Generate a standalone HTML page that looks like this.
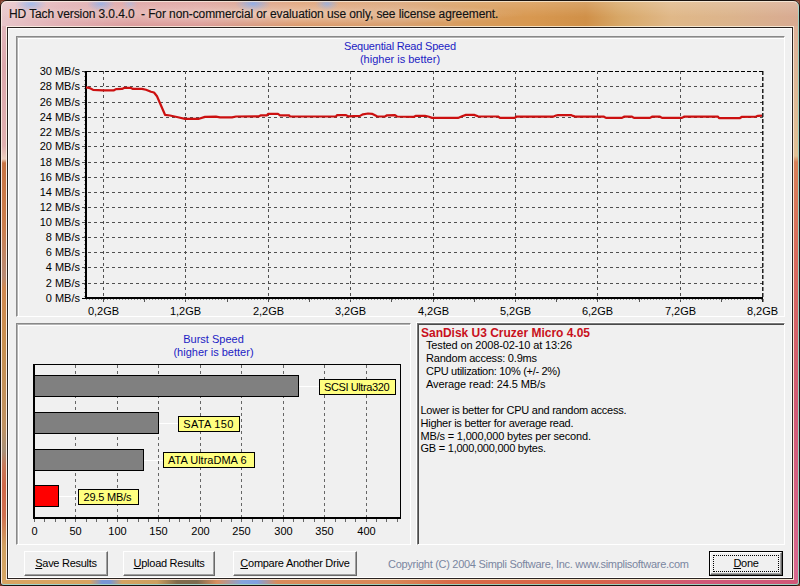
<!DOCTYPE html>
<html><head><meta charset="utf-8"><style>
html,body{margin:0;padding:0}
body{width:800px;height:586px;position:relative;overflow:hidden;background:#7a3a28;font-family:"Liberation Sans", sans-serif}
.abs{position:absolute}
#win{position:absolute;left:0;top:0;width:798px;height:584px;border:1px solid #1a1410;border-radius:7px 7px 4px 4px;overflow:hidden;
 background:radial-gradient(ellipse 16px 8px at 30px 3px,rgba(140,175,235,0.9),rgba(150,180,230,0)),radial-gradient(ellipse 14px 8px at 100px 3px,rgba(130,165,230,0.85),rgba(140,170,225,0)),radial-gradient(ellipse 8px 6px at 129px 3px,rgba(150,180,230,0.6),rgba(150,180,230,0)),radial-gradient(ellipse 18px 8px at 252px 3px,rgba(110,155,235,0.9),rgba(120,160,230,0)),radial-gradient(ellipse 12px 7px at 326px 3px,rgba(120,160,230,0.8),rgba(130,165,225,0)),linear-gradient(90deg,#e8c6ca 0px,#e2b0b4 60px,#dc9e9e 130px,#dc9c98 200px,#d89a86 240px,#dc9a6c 300px,#d8a070 400px,#d89c5c 470px,#d89850 530px,#d09048 585px,#d8a868 620px,#e0b888 670px,#dcb48c 730px,#d8aa92 800px)}
#lf{position:absolute;left:2px;top:26px;width:4px;height:558px;background:linear-gradient(180deg,#e2b6bc 0,#dca8ac 40px,#e0b0b0 120px,#ecd0c0 133px,#c87444 137px,#cc7e4c 200px,#b88a74 250px,#d08850 262px,#c89050 320px,#c09262 400px,#a89078 425px,#c87858 440px,#d06848 460px,#d07050 490px,#d0a060 520px,#d8a866 558px)}
#rf{position:absolute;left:794px;top:26px;width:4px;height:558px;background:linear-gradient(180deg,#dcb098 0,#e0c094 130px,#d88058 136px,#d86a5c 230px,#d05a74 380px,#d86890 558px)}
#bf{position:absolute;left:2px;top:580px;width:796px;height:4px;background:linear-gradient(90deg,#d8a462 0,#d8a462 88px,#7896d4 100px,#7896d4 108px,#d4a462 120px,#cca060 155px,#806c4c 175px,#7c6c50 195px,#d89060 215px,#84a4dc 240px,#80a0e0 255px,#d88c5c 275px,#d88858 390px,#d86a48 450px,#d86448 590px,#d05878 700px,#d05878 797px)}
#glow{position:absolute;left:2px;top:2px;width:520px;height:24px;background:radial-gradient(ellipse 270px 12px at 255px 12px,rgba(255,245,235,0.45),rgba(255,245,235,0) 100%)}
#title{position:absolute;left:9px;top:7px;font-size:12px;color:#111;-webkit-text-stroke:0.15px #111;text-shadow:0 0 5px rgba(255,245,235,0.55);white-space:pre;letter-spacing:-0.1px;line-height:15px}
#client{position:absolute;left:7px;top:27px;width:784px;height:550px;border:1px solid #2a2320;background:#f0f0f0}
#client .hl{position:absolute;left:0;top:0;width:782px;height:548px;border:1px solid #fff}
.pan{position:absolute}
.btn{position:absolute;box-sizing:border-box;background:#f0f0f0;border-top:1px solid #fff;border-left:1px solid #fff;border-right:1px solid #696969;border-bottom:1px solid #696969}
.btn .b2{position:absolute;left:0;top:0;right:0;bottom:0;border-right:1px solid #a0a0a0;border-bottom:1px solid #a0a0a0}
.blab{position:absolute;font-size:11px;white-space:pre;color:#000;line-height:13px;text-align:center;letter-spacing:-0.27px}
svg text{font-family:"Liberation Sans", sans-serif}
.lab{font-size:11px;fill:#000}
.ttl{font-size:11px;fill:#1c1cc4}
.inf{font-size:11px;fill:#000}
.red{fill:#c81020;font-weight:bold;font-size:12px}
.copy{font-size:11px;fill:#7a86a0}
</style></head><body>
<div id="win"></div>
<div id="lf"></div><div id="rf"></div><div id="bf"></div>
<div class="abs" style="left:1px;top:1px;width:798px;height:584px;box-sizing:border-box;border:1px solid rgba(255,250,235,0.65);border-right-color:rgba(150,215,205,0.85);border-bottom-color:rgba(150,215,205,0.85);border-radius:6px 6px 3px 3px"></div>
<div class="abs" style="left:6px;top:26px;width:788px;height:554px;box-sizing:border-box;border:1px solid rgba(255,250,235,0.75)"></div>
<div class="abs" style="left:1px;top:1px;width:798px;height:16px;background:linear-gradient(180deg,rgba(255,255,255,0.18),rgba(255,255,255,0))"></div>
<div id="glow"></div>
<div id="title">HD Tach version 3.0.4.0  - For non-commercial or evaluation use only, see license agreement.</div>
<div id="client"><div class="hl"></div></div>
<!-- chart panel -->
<div class="pan" style="left:16px;top:36px;width:769px;height:281px;box-sizing:border-box;border-top:1px solid #888;border-left:1px solid #888;border-right:1px solid #fff;border-bottom:1px solid #fff"><div style="position:absolute;left:0;top:0;right:0;bottom:0;border-top:1px solid #b4b4b4;border-left:1px solid #b4b4b4"></div><div style="position:absolute;left:1px;top:1px;right:0;bottom:0;border-top:1px solid #fff;border-left:1px solid #fff"></div></div>
<!-- burst panel -->
<div class="pan" style="left:16px;top:323px;width:395px;height:222px;box-sizing:border-box;border-top:1px solid #888;border-left:1px solid #888;border-right:1px solid #fff;border-bottom:1px solid #fff"><div style="position:absolute;left:0;top:0;right:0;bottom:0;border-top:1px solid #b4b4b4;border-left:1px solid #b4b4b4"></div><div style="position:absolute;left:1px;top:1px;right:0;bottom:0;border-top:1px solid #fff;border-left:1px solid #fff"></div></div>
<!-- info panel -->
<div class="pan" style="left:416px;top:322px;width:369px;height:223px;box-sizing:border-box;border-top:1px solid #fff;border-left:1px solid #fff"><div style="position:absolute;left:0;top:0;right:0;bottom:0;border-top:1px solid #7a7a7a;border-left:1px solid #7a7a7a;border-right:1px solid #fff;border-bottom:1px solid #fff"><div style="position:absolute;left:0;top:0;right:0;bottom:0;border-top:1px solid #4a4a4a;border-left:1px solid #4a4a4a"></div></div></div>
<svg class="abs" style="left:0;top:0" width="800" height="586" viewBox="0 0 800 586">
<line x1="82" y1="71.5" x2="87" y2="71.5" stroke="#3a3a3a" stroke-width="1"/>
<line x1="87" y1="71.5" x2="764" y2="71.5" stroke="#000" stroke-width="1.2" stroke-dasharray="4,2" />
<text x="80" y="75" text-anchor="end" class="lab">30 MB/s</text>
<line x1="82" y1="86.5" x2="763" y2="86.5" stroke="#505050" stroke-width="1" stroke-dasharray="3,3" />
<text x="80" y="90" text-anchor="end" class="lab">28 MB/s</text>
<line x1="82" y1="102.5" x2="763" y2="102.5" stroke="#505050" stroke-width="1" stroke-dasharray="3,3" />
<text x="80" y="106" text-anchor="end" class="lab">26 MB/s</text>
<line x1="82" y1="117.5" x2="763" y2="117.5" stroke="#505050" stroke-width="1" stroke-dasharray="3,3" />
<text x="80" y="121" text-anchor="end" class="lab">24 MB/s</text>
<line x1="82" y1="132.5" x2="763" y2="132.5" stroke="#505050" stroke-width="1" stroke-dasharray="3,3" />
<text x="80" y="136" text-anchor="end" class="lab">22 MB/s</text>
<line x1="82" y1="146.5" x2="763" y2="146.5" stroke="#505050" stroke-width="1" stroke-dasharray="3,3" />
<text x="80" y="150" text-anchor="end" class="lab">20 MB/s</text>
<line x1="82" y1="162.5" x2="763" y2="162.5" stroke="#505050" stroke-width="1" stroke-dasharray="3,3" />
<text x="80" y="166" text-anchor="end" class="lab">18 MB/s</text>
<line x1="82" y1="177.5" x2="763" y2="177.5" stroke="#505050" stroke-width="1" stroke-dasharray="3,3" />
<text x="80" y="181" text-anchor="end" class="lab">16 MB/s</text>
<line x1="82" y1="192.5" x2="763" y2="192.5" stroke="#505050" stroke-width="1" stroke-dasharray="3,3" />
<text x="80" y="196" text-anchor="end" class="lab">14 MB/s</text>
<line x1="82" y1="207.5" x2="763" y2="207.5" stroke="#505050" stroke-width="1" stroke-dasharray="3,3" />
<text x="80" y="211" text-anchor="end" class="lab">12 MB/s</text>
<line x1="82" y1="222.5" x2="763" y2="222.5" stroke="#505050" stroke-width="1" stroke-dasharray="3,3" />
<text x="80" y="226" text-anchor="end" class="lab">10 MB/s</text>
<line x1="82" y1="237.5" x2="763" y2="237.5" stroke="#505050" stroke-width="1" stroke-dasharray="3,3" />
<text x="80" y="241" text-anchor="end" class="lab">8 MB/s</text>
<line x1="82" y1="252.5" x2="763" y2="252.5" stroke="#505050" stroke-width="1" stroke-dasharray="3,3" />
<text x="80" y="256" text-anchor="end" class="lab">6 MB/s</text>
<line x1="82" y1="267.5" x2="763" y2="267.5" stroke="#505050" stroke-width="1" stroke-dasharray="3,3" />
<text x="80" y="271" text-anchor="end" class="lab">4 MB/s</text>
<line x1="82" y1="283.5" x2="763" y2="283.5" stroke="#505050" stroke-width="1" stroke-dasharray="3,3" />
<text x="80" y="287" text-anchor="end" class="lab">2 MB/s</text>
<line x1="82" y1="298.5" x2="87" y2="298.5" stroke="#000" stroke-width="1"/>
<text x="80" y="302" text-anchor="end" class="lab">0 MB/s</text>
<line x1="103.5" y1="71" x2="103.5" y2="302" stroke="#505050" stroke-width="1" stroke-dasharray="3,3" />
<text x="103.5" y="315" text-anchor="middle" class="lab">0,2GB</text>
<line x1="185.5" y1="71" x2="185.5" y2="302" stroke="#505050" stroke-width="1" stroke-dasharray="3,3" />
<text x="185.5" y="315" text-anchor="middle" class="lab">1,2GB</text>
<line x1="268.5" y1="71" x2="268.5" y2="302" stroke="#505050" stroke-width="1" stroke-dasharray="3,3" />
<text x="268.5" y="315" text-anchor="middle" class="lab">2,2GB</text>
<line x1="350.5" y1="71" x2="350.5" y2="302" stroke="#505050" stroke-width="1" stroke-dasharray="3,3" />
<text x="350.5" y="315" text-anchor="middle" class="lab">3,2GB</text>
<line x1="433.5" y1="71" x2="433.5" y2="302" stroke="#505050" stroke-width="1" stroke-dasharray="3,3" />
<text x="433.5" y="315" text-anchor="middle" class="lab">4,2GB</text>
<line x1="515.5" y1="71" x2="515.5" y2="302" stroke="#505050" stroke-width="1" stroke-dasharray="3,3" />
<text x="515.5" y="315" text-anchor="middle" class="lab">5,2GB</text>
<line x1="597.5" y1="71" x2="597.5" y2="302" stroke="#505050" stroke-width="1" stroke-dasharray="3,3" />
<text x="597.5" y="315" text-anchor="middle" class="lab">6,2GB</text>
<line x1="680.5" y1="71" x2="680.5" y2="302" stroke="#505050" stroke-width="1" stroke-dasharray="3,3" />
<text x="680.5" y="315" text-anchor="middle" class="lab">7,2GB</text>
<line x1="762.8" y1="71" x2="762.8" y2="302" stroke="#000" stroke-width="1.3" stroke-dasharray="4,2" />
<text x="762.5" y="315" text-anchor="middle" class="lab">8,2GB</text>
<rect x="85" y="71" width="2" height="227" fill="#000"/>
<rect x="85" y="297" width="678" height="2" fill="#000"/>
<line x1="86" y1="299.5" x2="763" y2="299.5" stroke="#8a8a8a" stroke-width="1" stroke-dasharray="1,2"/>
<line x1="84.5" y1="72" x2="84.5" y2="297" stroke="#8a8a8a" stroke-width="1" stroke-dasharray="1,3"/>
<line x1="144.5" y1="299" x2="144.5" y2="302" stroke="#555" stroke-width="1"/>
<line x1="227.5" y1="299" x2="227.5" y2="302" stroke="#555" stroke-width="1"/>
<line x1="309.5" y1="299" x2="309.5" y2="302" stroke="#555" stroke-width="1"/>
<line x1="391.5" y1="299" x2="391.5" y2="302" stroke="#555" stroke-width="1"/>
<line x1="474.5" y1="299" x2="474.5" y2="302" stroke="#555" stroke-width="1"/>
<line x1="556.5" y1="299" x2="556.5" y2="302" stroke="#555" stroke-width="1"/>
<line x1="639.5" y1="299" x2="639.5" y2="302" stroke="#555" stroke-width="1"/>
<line x1="721.5" y1="299" x2="721.5" y2="302" stroke="#555" stroke-width="1"/>
<path d="M86,87.30 L89,87.80 L93,89.80 L103,90.30 L114,90.30 L116,89.10 L122,88.90 L124,87.90 L131,87.90 L133,88.90 L142,88.90 L146,89.80 L151,91.80 L154,92.50 L157,96.30 L165,114.80 L170,115.50 L178,117.30 L185,118.80 L199,118.80 L205,116.90 L216,116.60 L220,117.30 L232,117.30 L236,116.50 L259,116.30 L261,115.30 L267,115.30 L268,113.90 L278,113.90 L280,115.30 L289,115.30 L290,116.50 L336,116.50 L337,115.10 L346,115.10 L348,116.30 L360,115.90 L363,114.30 L368,113.50 L372,113.80 L377,116.30 L385,116.50 L387,115.30 L395,115.10 L397,116.50 L414,116.80 L416,115.80 L425,115.80 L429,116.80 L432,117.90 L458,117.90 L462,116.30 L466,114.90 L474,114.90 L478,116.30 L498,116.50 L500,117.90 L515,117.90 L516,116.70 L550,116.70 L553,116.70 L556,115.50 L558,115.10 L571,115.10 L573,115.90 L576,116.70 L604,116.70 L606,117.90 L622,117.90 L624,116.70 L632,116.70 L634,117.90 L650,117.90 L652,116.70 L660,116.70 L662,117.90 L682,117.90 L684,116.70 L718,116.70 L719,118.05 L740,118.05 L742,116.80 L756,116.55 L758,115.80 L762,115.55" fill="none" stroke="#cc1010" stroke-width="2.2" stroke-linejoin="round"/>
<text x="400" y="50" text-anchor="middle" class="ttl" textLength="112" lengthAdjust="spacing">Sequential Read Speed</text>
<text x="400" y="63" text-anchor="middle" class="ttl">(higher is better)</text>
<line x1="75.5" y1="365" x2="75.5" y2="517" stroke="#666" stroke-width="1" stroke-dasharray="3,3" />
<line x1="117.5" y1="365" x2="117.5" y2="517" stroke="#666" stroke-width="1" stroke-dasharray="3,3" />
<line x1="158.5" y1="365" x2="158.5" y2="517" stroke="#666" stroke-width="1" stroke-dasharray="3,3" />
<line x1="200.5" y1="365" x2="200.5" y2="517" stroke="#666" stroke-width="1" stroke-dasharray="3,3" />
<line x1="241.5" y1="365" x2="241.5" y2="517" stroke="#666" stroke-width="1" stroke-dasharray="3,3" />
<line x1="283.5" y1="365" x2="283.5" y2="517" stroke="#666" stroke-width="1" stroke-dasharray="3,3" />
<line x1="324.5" y1="365" x2="324.5" y2="517" stroke="#666" stroke-width="1" stroke-dasharray="3,3" />
<line x1="366.5" y1="365" x2="366.5" y2="517" stroke="#666" stroke-width="1" stroke-dasharray="3,3" />
<text x="34.5" y="535" text-anchor="middle" class="lab">0</text>
<text x="75.5" y="535" text-anchor="middle" class="lab">50</text>
<text x="117.5" y="535" text-anchor="middle" class="lab">100</text>
<text x="158.5" y="535" text-anchor="middle" class="lab">150</text>
<text x="200.5" y="535" text-anchor="middle" class="lab">200</text>
<text x="241.5" y="535" text-anchor="middle" class="lab">250</text>
<text x="283.5" y="535" text-anchor="middle" class="lab">300</text>
<text x="324.5" y="535" text-anchor="middle" class="lab">350</text>
<text x="366.5" y="535" text-anchor="middle" class="lab">400</text>
<line x1="34.5" y1="519" x2="34.5" y2="522" stroke="#666" stroke-width="1"/>
<line x1="44.5" y1="519" x2="44.5" y2="522" stroke="#666" stroke-width="1"/>
<line x1="55.5" y1="519" x2="55.5" y2="522" stroke="#666" stroke-width="1"/>
<line x1="65.5" y1="519" x2="65.5" y2="522" stroke="#666" stroke-width="1"/>
<line x1="75.5" y1="519" x2="75.5" y2="522" stroke="#666" stroke-width="1"/>
<line x1="86.5" y1="519" x2="86.5" y2="522" stroke="#666" stroke-width="1"/>
<line x1="96.5" y1="519" x2="96.5" y2="522" stroke="#666" stroke-width="1"/>
<line x1="107.5" y1="519" x2="107.5" y2="522" stroke="#666" stroke-width="1"/>
<line x1="117.5" y1="519" x2="117.5" y2="522" stroke="#666" stroke-width="1"/>
<line x1="127.5" y1="519" x2="127.5" y2="522" stroke="#666" stroke-width="1"/>
<line x1="138.5" y1="519" x2="138.5" y2="522" stroke="#666" stroke-width="1"/>
<line x1="148.5" y1="519" x2="148.5" y2="522" stroke="#666" stroke-width="1"/>
<line x1="158.5" y1="519" x2="158.5" y2="522" stroke="#666" stroke-width="1"/>
<line x1="169.5" y1="519" x2="169.5" y2="522" stroke="#666" stroke-width="1"/>
<line x1="179.5" y1="519" x2="179.5" y2="522" stroke="#666" stroke-width="1"/>
<line x1="189.5" y1="519" x2="189.5" y2="522" stroke="#666" stroke-width="1"/>
<line x1="200.5" y1="519" x2="200.5" y2="522" stroke="#666" stroke-width="1"/>
<line x1="210.5" y1="519" x2="210.5" y2="522" stroke="#666" stroke-width="1"/>
<line x1="221.5" y1="519" x2="221.5" y2="522" stroke="#666" stroke-width="1"/>
<line x1="231.5" y1="519" x2="231.5" y2="522" stroke="#666" stroke-width="1"/>
<line x1="241.5" y1="519" x2="241.5" y2="522" stroke="#666" stroke-width="1"/>
<line x1="252.5" y1="519" x2="252.5" y2="522" stroke="#666" stroke-width="1"/>
<line x1="262.5" y1="519" x2="262.5" y2="522" stroke="#666" stroke-width="1"/>
<line x1="272.5" y1="519" x2="272.5" y2="522" stroke="#666" stroke-width="1"/>
<line x1="283.5" y1="519" x2="283.5" y2="522" stroke="#666" stroke-width="1"/>
<line x1="293.5" y1="519" x2="293.5" y2="522" stroke="#666" stroke-width="1"/>
<line x1="303.5" y1="519" x2="303.5" y2="522" stroke="#666" stroke-width="1"/>
<line x1="314.5" y1="519" x2="314.5" y2="522" stroke="#666" stroke-width="1"/>
<line x1="324.5" y1="519" x2="324.5" y2="522" stroke="#666" stroke-width="1"/>
<line x1="335.5" y1="519" x2="335.5" y2="522" stroke="#666" stroke-width="1"/>
<line x1="345.5" y1="519" x2="345.5" y2="522" stroke="#666" stroke-width="1"/>
<line x1="355.5" y1="519" x2="355.5" y2="522" stroke="#666" stroke-width="1"/>
<line x1="366.5" y1="519" x2="366.5" y2="522" stroke="#666" stroke-width="1"/>
<line x1="376.5" y1="519" x2="376.5" y2="522" stroke="#666" stroke-width="1"/>
<line x1="386.5" y1="519" x2="386.5" y2="522" stroke="#666" stroke-width="1"/>
<line x1="397.5" y1="519" x2="397.5" y2="522" stroke="#666" stroke-width="1"/>
<rect x="33.5" y="364.5" width="367" height="153" fill="none" stroke="#000" stroke-width="1"/>
<rect x="33" y="364" width="2" height="155" fill="#000"/>
<rect x="33" y="517" width="368" height="2" fill="#000"/>
<line x1="298" y1="386.5" x2="319" y2="386.5" stroke="#fff" stroke-width="1"/>
<rect x="34.5" y="375.5" width="264" height="21" fill="#808080" stroke="#000" stroke-width="1"/>
<rect x="319.5" y="379.5" width="76" height="15" fill="#ffff80" stroke="#000" stroke-width="1"/>
<text x="324" y="391" class="lab" textLength="65.5" lengthAdjust="spacing">SCSI Ultra320</text>
<line x1="158" y1="423.5" x2="178" y2="423.5" stroke="#fff" stroke-width="1"/>
<rect x="34.5" y="412.5" width="124" height="21" fill="#808080" stroke="#000" stroke-width="1"/>
<rect x="178.5" y="416.5" width="61" height="15" fill="#ffff80" stroke="#000" stroke-width="1"/>
<text x="183.3" y="428" class="lab" textLength="50" lengthAdjust="spacing">SATA 150</text>
<line x1="143" y1="460.5" x2="163" y2="460.5" stroke="#fff" stroke-width="1"/>
<rect x="34.5" y="449.5" width="109" height="21" fill="#808080" stroke="#000" stroke-width="1"/>
<rect x="163.5" y="452.5" width="91" height="15" fill="#ffff80" stroke="#000" stroke-width="1"/>
<text x="168" y="464" class="lab" textLength="78.5" lengthAdjust="spacing">ATA UltraDMA 6</text>
<line x1="58" y1="496.5" x2="78" y2="496.5" stroke="#fff" stroke-width="1"/>
<rect x="34.5" y="485.5" width="24" height="21" fill="#ff0000" stroke="#000" stroke-width="1"/>
<rect x="78.5" y="489.5" width="60" height="15" fill="#ffff80" stroke="#000" stroke-width="1"/>
<text x="83.5" y="501" class="lab" textLength="48" lengthAdjust="spacing">29.5 MB/s</text>
<text x="213.5" y="343" text-anchor="middle" class="ttl">Burst Speed</text>
<text x="213.5" y="356" text-anchor="middle" class="ttl">(higher is better)</text>
<text x="421" y="337" class="inf red" textLength="169" lengthAdjust="spacing">SanDisk U3 Cruzer Micro 4.05</text>
<text x="426" y="349" class="inf" textLength="146" lengthAdjust="spacing">Tested on 2008-02-10 at 13:26</text>
<text x="426" y="362" class="inf" textLength="111" lengthAdjust="spacing">Random access: 0.9ms</text>
<text x="426" y="375" class="inf" textLength="134.5" lengthAdjust="spacing">CPU utilization: 10% (+/- 2%)</text>
<text x="426" y="388" class="inf" textLength="119.5" lengthAdjust="spacing">Average read: 24.5 MB/s</text>
<text x="420.5" y="414" class="inf" textLength="206" lengthAdjust="spacing">Lower is better for CPU and random access.</text>
<text x="420.5" y="427" class="inf" textLength="153" lengthAdjust="spacing">Higher is better for average read.</text>
<text x="420.5" y="440" class="inf" textLength="170.5" lengthAdjust="spacing">MB/s = 1,000,000 bytes per second.</text>
<text x="420.5" y="452" class="inf" textLength="125.5" lengthAdjust="spacing">GB = 1,000,000,000 bytes.</text>
<text x="388" y="568" class="copy" textLength="301" lengthAdjust="spacing">Copyright (C) 2004 Simpli Software, Inc. www.simplisoftware.com</text>
</svg>
<div class="btn" style="left:24px;top:551px;width:84px;height:25px"><div class="b1"></div><div class="b2"></div></div>
<div class="btn" style="left:123px;top:551px;width:92px;height:25px"><div class="b1"></div><div class="b2"></div></div>
<div class="btn" style="left:233px;top:551px;width:124px;height:25px"><div class="b1"></div><div class="b2"></div></div>
<div style="position:absolute;left:709px;top:551px;width:72px;height:23px;border:1px solid #000"></div><div class="btn" style="left:710px;top:552px;width:72px;height:23px"><div class="b1"></div><div class="b2"></div></div>
<div class="abs" style="left:713px;top:555px;width:64px;height:15px;border:1px dotted #000"></div>
<div class="blab" style="left:24px;top:557px;width:84px"><u>S</u>ave Results</div>
<div class="blab" style="left:123px;top:557px;width:92px"><u>U</u>pload Results</div>
<div class="blab" style="left:233px;top:557px;width:124px"><u>C</u>ompare Another Drive</div>
<div class="blab" style="left:709px;top:557px;width:74px"><u>D</u>one</div>
</body></html>
